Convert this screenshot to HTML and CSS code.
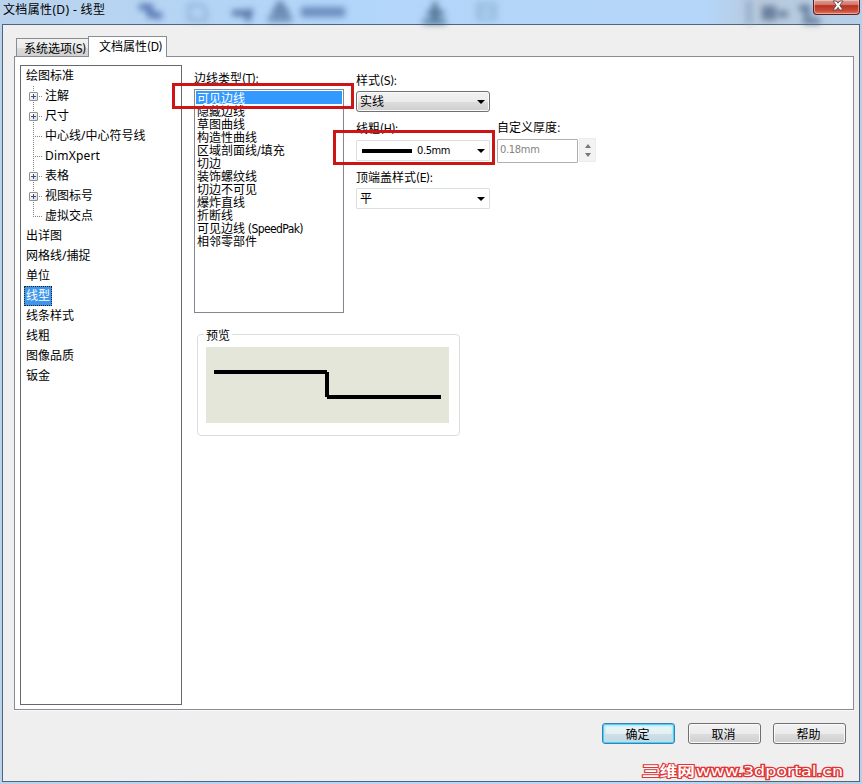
FILE: index.html
```html
<!DOCTYPE html>
<html lang="zh-CN">
<head>
<meta charset="utf-8">
<title>文档属性(D) - 线型</title>
<link rel="stylesheet" href="styles.css">
</head>
<body>
<div class="window">
  <header class="titlebar">
    <svg class="glass" width="862" height="24" viewBox="0 0 862 24" aria-hidden="true">
      <g fill="none" stroke-width="6">
        <path d="M139 7h11v5M147 15h12v4" stroke="#4566a8" opacity=".85"/>
        <path d="M189 5h13l4 5v10h-17z" stroke="#7c9fc6" stroke-width="3" opacity=".7"/>
        <path d="M232 13h16v8M248 12h5" stroke="#3d5f92" opacity=".8"/>
        <path d="M280 3l-6 10h13zM268 19h24" stroke="#3c5d86" stroke-width="4" opacity=".8"/>
        <path d="M301 12h44" stroke="#4b6fa6" stroke-width="10" opacity=".7"/>
        <path d="M435 2v19M427 13h17M423 22h23" stroke="#2f5673" stroke-width="5" opacity=".8"/>
        <path d="M478 4h17v15h-17zM478 11h17" stroke="#83abc8" stroke-width="3" opacity=".8"/>
        <path d="M749 0v24" stroke="#7f9cbd" opacity=".6"/>
        <path d="M765 9h8v8h-8zM778 14h10M799 8h8v9M803 21h17" stroke="#4f6888" opacity=".8"/>
      </g>
    </svg>
    <h1 class="title">文档属性(D) - 线型</h1>
    <button class="close" aria-label="关闭"><svg width="12" height="11" viewBox="0 0 12 11"><path d="M1 1h3.3L6 3.2 7.7 1H11L7.8 5.3 11 10H7.7L6 7.4 4.3 10H1l3.2-4.7z" fill="#fff" stroke="#60434b" stroke-width=".9"/></svg></button>
  </header>
  <main class="dialog">
    <nav class="tabs">
      <div class="tab">系统选项<span class="en">(S)</span></div>
      <div class="tab tab-active">文档属性<span class="en">(D)</span></div>
    </nav>
    <section class="panel">
      <ul class="tree">
        <li><span>绘图标准</span>
          <ul class="branch">
            <li class="node"><i class="plus"></i><span>注解</span></li>
            <li class="node"><i class="plus"></i><span>尺寸</span></li>
            <li class="node"><span>中心线/中心符号线</span></li>
            <li class="node"><span class="latin">DimXpert</span></li>
            <li class="node"><i class="plus"></i><span>表格</span></li>
            <li class="node"><i class="plus"></i><span>视图标号</span></li>
            <li class="node"><span>虚拟交点</span></li>
          </ul>
        </li>
        <li><span>出详图</span></li>
        <li><span>网格线/捕捉</span></li>
        <li><span>单位</span></li>
        <li><span class="picked">线型</span></li>
        <li><span>线条样式</span></li>
        <li><span>线粗</span></li>
        <li><span>图像品质</span></li>
        <li><span>钣金</span></li>
      </ul>
      <div class="content">
        <div class="settings">
          <div class="edge-types">
            <div class="label">边线类型<span class="en">(T):</span></div>
            <ul class="listbox">
              <li class="selected">可见边线</li>
              <li>隐藏边线</li>
              <li>草图曲线</li>
              <li>构造性曲线</li>
              <li>区域剖面线/填充</li>
              <li>切边</li>
              <li>装饰螺纹线</li>
              <li>切边不可见</li>
              <li>爆炸直线</li>
              <li>折断线</li>
              <li>可见边线<span class="en"> (SpeedPak)</span></li>
              <li>相邻零部件</li>
            </ul>
            <div class="mark mark-type"></div>
          </div>
          <div class="styles">
            <div class="label label-style">样式<span class="en">(S):</span></div>
            <div class="select select-button"><span>实线</span><i class="arrow"></i></div>
            <div class="label">线粗<span class="en">(H):</span></div>
            <div class="select"><i class="stroke"></i><span class="value">0.5mm</span><i class="arrow"></i></div>
            <div class="label">顶端盖样式<span class="en">(E):</span></div>
            <div class="select select-cap"><span>平</span><i class="arrow"></i></div>
            <div class="mark mark-weight"></div>
          </div>
          <div class="custom">
            <div class="label">自定义厚度:</div>
            <div class="stepper">
              <div class="input">0.18mm</div>
              <div class="spin"><i class="up"></i><i class="down"></i></div>
            </div>
          </div>
        </div>
        <div class="preview">
          <div class="legend">预览</div>
          <svg class="sample" width="243" height="76" viewBox="0 0 243 76">
            <path d="M8 25h113M121 50h114M121 25v25" fill="none" stroke="#000" stroke-width="4"/>
          </svg>
        </div>
      </div>
    </section>
    <footer class="actions">
      <button class="button button-default">确定</button>
      <button class="button">取消</button>
      <button class="button">帮助</button>
    </footer>
    <svg class="watermark" width="206" height="20" viewBox="0 0 206 20">
      <text x="3" y="15" textLength="53" lengthAdjust="spacingAndGlyphs">三维网</text>
      <text x="57" y="15" textLength="147" lengthAdjust="spacingAndGlyphs" class="site">www.3dportal.cn</text>
    </svg>
  </main>
</div>
</body>
</html>
```

FILE: styles.css
```css
* { box-sizing: border-box; }
body {
  margin: 0;
  color: #000;
  font: 12px/14px "DejaVu Sans Condensed", "Noto Sans CJK SC", sans-serif;
}
ul { list-style: none; margin: 0; padding: 0; }
span, .label, li, .tab, .title { white-space: nowrap; }
.en { letter-spacing: -.6px; }

.window {
  width: 862px;
  height: 784px;
  overflow: hidden;
  padding: 0 2px 2px;
  background: linear-gradient(90deg, #b9d3ed, #b2d5fa 40%, #b5d6f8 82%, #b8c9dc 88%, #b7cfe8);
}
.titlebar {
  position: relative;
  display: flex;
  justify-content: space-between;
  height: 24px;
}
.glass { position: absolute; left: -2px; top: 0; filter: blur(3px); }
.title {
  position: relative;
  margin: 2px 0 0 1px;
  font: 12px/16px "Noto Sans", "Noto Sans CJK SC", sans-serif;
  letter-spacing: .35px;
}
.close {
  position: relative;
  display: flex;
  justify-content: center;
  width: 47px;
  height: 15px;
  padding: 0 0 0 2px;
  border: 1px solid #5a1e24;
  border-top: 0;
  border-radius: 0 0 4px 4px;
  background: linear-gradient(#dda198, #cd7467 35%, #b93222 40%, #cb4937 75%, #df7b64);
  box-shadow: inset 0 0 0 1px rgba(255, 220, 210, .5);
}

.dialog {
  display: flex;
  flex-direction: column;
  width: 858px;
  height: 758px;
  padding: 11px 5px 0 11px;
  border: 1px solid #526479;
  background: #efefef;
}
.tabs { display: flex; align-items: flex-end; height: 20px; padding-left: 2px; }
.tab {
  width: 73px;
  height: 18px;
  padding: 3px 0 0 7px;
  border: 1px solid #898c95;
  border-bottom: 0;
  background: linear-gradient(#f2f2f2, #ebebeb 50%, #dddddd 50%, #d0d0d0);
}
.tab-active {
  position: relative;
  width: 79px;
  height: 21px;
  margin: 0 0 -1px -1px;
  padding: 3px 0 0 10px;
  background: #fff;
}
.panel {
  display: flex;
  flex: none;
  width: 840px;
  height: 654px;
  padding: 8px 5px;
  border: 1px solid #898c95;
  background: #fff;
  box-shadow: 0 1px #fafafa;
}

.tree {
  flex: none;
  width: 162px;
  height: 640px;
  border: 1px solid #65686c;
  line-height: 20px;
  padding-left: 5px;
  font-family: "Noto Sans", "Noto Sans CJK SC", sans-serif;
}
.branch {
  margin-left: 7px;
  background: repeating-linear-gradient(#888 0 1px, transparent 1px 2px) 0 0 / 1px 131px no-repeat;
}
.node { position: relative; height: 20px; padding-left: 12px; }
.node::before {
  content: "";
  position: absolute;
  left: 0;
  top: 10px;
  width: 9px;
  height: 1px;
  background: repeating-linear-gradient(90deg, #888 0 1px, transparent 1px 2px);
}
.plus {
  position: absolute;
  left: -4px;
  top: 6px;
  width: 9px;
  height: 9px;
  border: 1px solid #919191;
  border-radius: 1px;
  background:
    linear-gradient(#3b4e89, #3b4e89) 1px 3px / 5px 1px no-repeat,
    linear-gradient(#3b4e89, #3b4e89) 3px 1px / 1px 5px no-repeat,
    linear-gradient(135deg, #fff, #dcdcdc);
}
.latin { letter-spacing: .2px; }
.picked {
  display: inline-block;
  height: 20px;
  margin-left: -2px;
  padding: 0 1px;
  border: 1px dotted #222;
  line-height: 18px;
  color: #fff;
  background: #3d96ea;
  vertical-align: top;
}

.content { padding-left: 12px; }
.settings { display: flex; height: 248px; }
.label { height: 14px; }
.edge-types { position: relative; width: 162px; padding-top: 7px; }
.listbox {
  width: 150px;
  height: 224px;
  margin-top: 3px;
  padding: 1px;
  border: 1px solid #828790;
  line-height: 16px;
}
.listbox li { height: 13px; padding-left: 1px; }
.listbox .selected { color: #fff; background: #3399ff; }
.mark { position: absolute; border: 3px solid #cc1616; }
.mark-type { left: -22px; top: 18px; width: 182px; height: 26px; }

.styles { position: relative; width: 141px; padding-top: 8px; }
.label-style { line-height: 16px; }
.select {
  display: flex;
  align-items: center;
  width: 134px;
  height: 21px;
  margin: 4px 0 10px;
  padding: 0 4px 0 3px;
  border: 1px solid #dcdfe2;
  border-radius: 1px;
  background: #fff;
}
.select-cap { margin-top: 3px; }
.select-button {
  border-color: #707070;
  border-radius: 3px;
  background: linear-gradient(#f2f2f2, #ebebeb 50%, #dddddd 50%, #cfcfcf);
  box-shadow: inset 0 0 0 1px #fafafa;
}
.arrow {
  margin-left: auto;
  border: 4px solid transparent;
  border-top-color: #000;
  border-bottom: 0;
}
.stroke { width: 50px; height: 4px; margin: 0 5px 0 2px; background: #000; }
.value { font-size: 11px; letter-spacing: -.4px; }
.mark-weight { left: -23px; top: 65px; width: 162px; height: 35px; }

.custom { padding-top: 56px; }
.stepper { display: flex; margin-top: 3px; }
.input {
  width: 81px;
  height: 24px;
  margin-top: 1px;
  padding: 3px 2px;
  border: 1px solid #afafaf;
  border-radius: 1px;
  color: #838383;
  font-size: 11px;
  letter-spacing: -.3px;
}
.spin {
  display: flex;
  flex-direction: column;
  align-items: center;
  justify-content: space-between;
  width: 17px;
  height: 24px;
  margin-left: 1px;
  padding: 5px 0 4px;
  border: 1px solid #ececec;
  background: #f3f3f3;
}
.up, .down { border: 3px solid transparent; }
.up { border-top: 0; border-bottom: 4px solid #777; }
.down { border-bottom: 0; border-top: 4px solid #777; }

.preview {
  width: 263px;
  height: 102px;
  margin: 21px 0 0 3px;
  padding-left: 8px;
  border: 1px solid #d9dedd;
  border-radius: 4px;
}
.legend {
  width: 28px;
  height: 14px;
  margin: -7px 0 5px -2px;
  padding-left: 2px;
  line-height: 16px;
  background: #fff;
}
.sample { display: block; background: #e5e6da; }

.actions { display: flex; gap: 13px; justify-content: flex-end; margin: 13px 8px 0 0; }
.actions .button:last-child { margin-left: -1px; }
.button {
  width: 73px;
  height: 21px;
  padding: 2px 2px 0 0;
  border: 1px solid #707070;
  border-radius: 3px;
  color: #000;
  font: inherit;
  background: linear-gradient(#f2f2f2, #ebebeb 50%, #dddddd 50%, #cfcfcf);
  box-shadow: inset 0 0 0 1px #fafafa;
}
.button-default {
  border-color: #3c7fb1;
  background: linear-gradient(#eef6f9, #e2eff4 50%, #cfe0e7 50%, #c5d8df);
  box-shadow: inset 0 0 0 1px #48d0f5, inset 0 0 2px 2px #a9e6f7;
}
.watermark {
  align-self: flex-end;
  overflow: visible;
  margin: 17px 9px 0 0;
  font: bold 14px "DejaVu Sans", "Noto Sans CJK SC", sans-serif;
  fill: #fff;
  stroke: #e03535;
  stroke-width: 2px;
  paint-order: stroke;
}
.site { font-weight: normal; stroke-width: 2.6px; }
```
